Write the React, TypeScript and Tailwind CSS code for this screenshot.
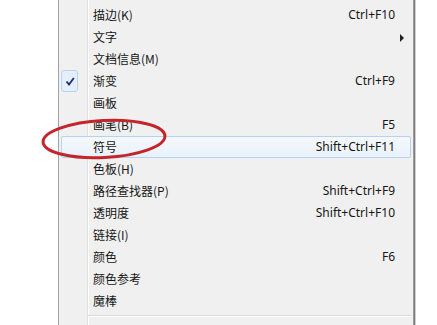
import React from "react";

interface Item {
  label: string;
  shortcut?: string;
  checked?: boolean;
  submenu?: boolean;
  active?: boolean;
}

const items: Item[] = [
  { label: "描边(K)", shortcut: "Ctrl+F10" },
  { label: "文字", submenu: true },
  { label: "文档信息(M)" },
  { label: "渐变", shortcut: "Ctrl+F9", checked: true },
  { label: "画板" },
  { label: "画笔(B)", shortcut: "F5" },
  { label: "符号", shortcut: "Shift+Ctrl+F11", active: true },
  { label: "色板(H)" },
  { label: "路径查找器(P)", shortcut: "Shift+Ctrl+F9" },
  { label: "透明度", shortcut: "Shift+Ctrl+F10" },
  { label: "链接(I)" },
  { label: "颜色", shortcut: "F6" },
  { label: "颜色参考" },
  { label: "魔棒" },
];

function MenuRow({ item }: { item: Item }) {
  return (
    <div
      className={
        "relative ml-[2px] mr-[2px] flex h-[22px] items-center justify-between rounded-[2px] border pl-[31px] pr-[15px] " +
        (item.active
          ? "border-[#b4d3f4] bg-[linear-gradient(to_bottom,#f5f9fd,#e9f1fb)]"
          : "border-transparent")
      }
    >
      {item.checked && (
        <div className="absolute left-[-1px] top-[-1px] flex h-[22px] w-[17px] items-center justify-center rounded-[3px] border border-[#b4d3f4] bg-[#e6eefa]">
          <svg width="10" height="9" viewBox="0 0 10 9">
            <path d="M1.5 4.5 L4 7.5 L8.8 1" fill="none" stroke="#1c2c7e" strokeWidth="1.8" />
          </svg>
        </div>
      )}
      <span className="text-[12px] text-[#161616]">{item.label}</span>
      {item.shortcut && (
        <span className="font-['Noto_Sans',sans-serif] text-[12px] text-[#161616]">{item.shortcut}</span>
      )}
      {item.submenu && (
        <span className="absolute right-[6px] top-[7px] h-0 w-0 border-y-[4px] border-l-[4px] border-y-transparent border-l-[#222]" />
      )}
    </div>
  );
}

export default function App() {
  return (
    <div className="relative flex h-[325px] w-[437px] overflow-hidden bg-white font-['Noto_Sans_CJK_SC','Noto_Sans',sans-serif]">
      <div className="w-[58px] shrink-0" />
      <div className="flex w-[356px] shrink-0 flex-col border-l border-r border-l-[#a3a3a3] border-r-[#9c9c9c] bg-[linear-gradient(to_right,#f0f0f0_28px,#e0e1e1_28px,#e0e1e1_29px,#ffffff_29px,#ffffff_30px,#f0f0f0_30px)] pt-[4px] shadow-[1px_0_0_#7d7d7d,2px_0_0_#cfcfcf]">
        {items.map((item) => (
          <MenuRow key={item.label} item={item} />
        ))}
        <div className="ml-[29px] mr-[2px] mt-[3px] h-[2px] border-t border-b border-t-[#dcdcdc] border-b-white" />
      </div>

      <svg className="pointer-events-none absolute left-0 top-0" width="437" height="325">
        <ellipse
          cx="104"
          cy="139"
          rx="61"
          ry="18.5"
          transform="rotate(-3 104 139)"
          fill="none"
          stroke="#c3252b"
          strokeWidth="3"
        />
      </svg>
    </div>
  );
}
